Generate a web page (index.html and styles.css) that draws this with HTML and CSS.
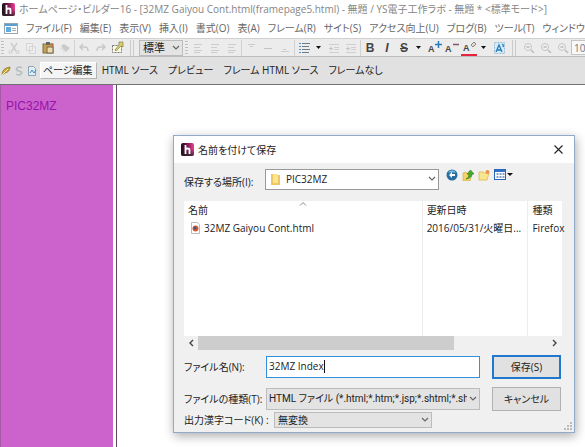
FILE: index.html
```html
<!DOCTYPE html>
<html lang="ja">
<head>
<meta charset="utf-8">
<title>ホームページ・ビルダー16</title>
<link rel="stylesheet" href="styles.css">
</head>
<body>
<svg class="defs" aria-hidden="true">
  <defs>
    <linearGradient id="logo-fill" x1="0" y1="0" x2="1" y2="0"><stop offset="0" stop-color="#16111a"/><stop offset=".4" stop-color="#6c1246"/><stop offset="1" stop-color="#ee3e92"/></linearGradient>
    <linearGradient id="logo-shade" x1="0" y1="0" x2="0" y2="1"><stop offset=".45" stop-color="#222" stop-opacity="0"/><stop offset="1" stop-color="#222" stop-opacity=".8"/></linearGradient>
    <symbol id="logo" viewBox="0 0 13 13"><rect width="13" height="13" rx="2" fill="url(#logo-fill)"/><rect width="13" height="13" rx="2" fill="url(#logo-shade)"/><path d="M4.500 2v9M4.500 7q0-1.500 2-1.500t2 1.500v4" fill="none" stroke="#fff" stroke-width="1.800"/></symbol>
    <symbol id="chevron" viewBox="0 0 8 6"><path d="M1 1l3 3 3-3" fill="none" stroke="#666" stroke-width="1.200"/></symbol>
    <symbol id="caret" viewBox="0 0 5 3"><path d="M0 0h5L2.500 3z" fill="#111"/></symbol>
    <symbol id="lines" viewBox="0 0 16 16"><path d="M4 4.500h8M4 7.500h6M4 10.500h8M4 12.500h6" stroke="#cdcdcd"/></symbol>
    <symbol id="indent" viewBox="0 0 16 16"><path d="M3 4.500h10M8 7.500h5M8 9.500h5M3 12.500h10" stroke="#cfcfcf"/><path d="M3 8.500h4M5 6.500v4" stroke="#c4c4c4"/></symbol>
    <symbol id="lens" viewBox="0 0 16 16"><circle cx="7" cy="7" r="3.500" fill="#eee" stroke="#c6c6c6"/><path d="M10 10l3 3M5.500 7h3" stroke="#bcbcbc" stroke-width="1.500"/></symbol>
  </defs>
</svg>

<div class="app">
  <header class="titlebar">
    <svg class="logo"><use href="#logo"/></svg>
    <h1>ホームページ・ビルダー16 - [32MZ Gaiyou Cont.html(framepage5.html) - 無題 / YS電子工作ラボ - 無題 * &lt;標準モード&gt;]</h1>
  </header>

  <nav class="menubar" aria-label="メニュー">
    <svg class="doc" viewBox="0 0 14 11"><rect x=".5" y=".5" width="13" height="10" fill="#fff" stroke="#93a6b6"/><path d="M1 2h12" stroke="#5a9ed2" stroke-width="2"/><rect x="2" y="4" width="5" height="5" fill="#64aadd"/><path d="M8 5.500h4M8 7.500h4" stroke="#aaa"/></svg>
    <button>ファイル(F)</button><button>編集(E)</button><button>表示(V)</button><button>挿入(I)</button><button>書式(O)</button><button>表(A)</button><button>フレーム(R)</button><button>サイト(S)</button><button>アクセス向上(U)</button><button>ブログ(B)</button><button>ツール(T)</button><button>ウィンドウ</button>
  </nav>

  <div class="toolbar" role="toolbar" aria-label="ツールバー">
    <span class="grip"></span>
    <div class="group">
      <button aria-label="切り取り"><svg viewBox="0 0 16 16"><path d="M5 3l5 8M11 3l-5 8" stroke="#ccc" stroke-width="1.500"/><circle cx="4.500" cy="12" r="1.500" fill="none" stroke="#ccc"/><circle cx="11.500" cy="12" r="1.500" fill="none" stroke="#ccc"/></svg></button>
      <button aria-label="コピー"><svg viewBox="0 0 16 16"><path d="M3.500 3.500h6v7h-6zM6.500 6.500h6v7h-6z" fill="#eee" stroke="#d6d6d6"/></svg></button>
      <button aria-label="貼り付け"><svg viewBox="0 0 16 16"><rect x="3" y="4" width="10" height="9" fill="#c9a04c" stroke="#77704c"/><rect x="6" y="2" width="4" height="3" fill="#666"/><rect x="7" y="7" width="6" height="6" fill="#ecdcac" stroke="#765"/><path d="M12 3v4" stroke="#e35543"/></svg></button>
      <button aria-label="書式のコピー"><svg viewBox="0 0 16 16"><path d="M4 6l3-2 6 4-4 4z" fill="#cacaca"/><path d="M3 8l4 2v3" stroke="#d8d8d8" fill="none"/></svg></button>
    </div>
    <span class="sep"></span>
    <div class="group">
      <button aria-label="元に戻す"><svg viewBox="0 0 16 16"><path d="M7 4L4 7l3 3M4 7h5q3 0 3 4" fill="none" stroke="#c8c8c8" stroke-width="1.500"/></svg></button>
      <button aria-label="やり直し"><svg viewBox="0 0 16 16"><path d="M9 4l3 3-3 3M12 7H7q-3 0-3 4" fill="none" stroke="#c8c8c8" stroke-width="1.500"/></svg></button>
    </div>
    <button aria-label="属性"><svg viewBox="0 0 16 16"><rect x="3.500" y="5.500" width="9" height="7" fill="#fafae8" stroke="#777" stroke-dasharray="2 1"/><path d="M10 2h4v5l-2-1-5 5-1-1 4-5z" fill="#d7d06a" stroke="#858046" stroke-width=".7"/></svg></button>
    <span class="sep double"></span>
    <label class="combo style"><select aria-label="スタイル"><option>標準</option></select><svg class="chev"><use href="#chevron"/></svg></label>
    <span class="grip"></span>
    <div class="group">
      <button aria-label="左揃え"><svg><use href="#lines"/></svg></button>
      <button aria-label="中央揃え"><svg><use href="#lines"/></svg></button>
      <button aria-label="右揃え"><svg><use href="#lines"/></svg></button>
    </div>
    <span class="sep"></span>
    <div class="group">
      <button aria-label="上揃え"><svg viewBox="0 0 16 16"><path d="M5 4.500h7M7 6.500h3" stroke="#ccc"/></svg></button>
      <button aria-label="中段揃え"><svg viewBox="0 0 16 16"><path d="M4 8.500h8" stroke="#c4c4c4"/></svg></button>
      <button aria-label="下揃え"><svg viewBox="0 0 16 16"><path d="M4 11.500h8M6 9.500h3" stroke="#ccc"/></svg></button>
    </div>
    <span class="sep"></span>
    <button aria-label="リスト"><svg viewBox="0 0 16 16"><path d="M6 3.500h8M6 6.500h7M6 9.500h8M6 12.500h7" stroke="#707d88"/><path d="M3 3.500h2M3 6.500h2M3 9.500h2M3 12.500h2" stroke="#3d95d8"/></svg></button>
    <svg class="caret"><use href="#caret"/></svg>
    <div class="group">
      <button aria-label="字下げ"><svg><use href="#indent"/></svg></button>
      <button aria-label="字上げ"><svg><use href="#indent"/></svg></button>
    </div>
    <span class="sep"></span>
    <div class="group">
      <button class="glyph bold">B</button><button class="glyph italic">I</button><button class="glyph strike">S</button>
    </div>
    <svg class="caret"><use href="#caret"/></svg>
    <div class="group">
      <button class="glyph sized" aria-label="文字を大きく">A<svg viewBox="0 0 7 7"><path d="M0 3.500h7M3.500 0v7" stroke="#267bbd" stroke-width="1.500"/></svg></button>
      <button class="glyph sized" aria-label="文字を小さく">A<svg viewBox="0 0 7 7"><path d="M1 3.500h6" stroke="#84546f" stroke-width="1.500"/></svg></button>
    </div>
    <button class="glyph sized color" aria-label="文字色">A<svg viewBox="0 0 7 7"><path d="M1 4l3-3 2 2-3 3z" fill="#ddd" stroke="#888"/></svg></button>
    <svg class="caret"><use href="#caret"/></svg>
    <button aria-label="フォント"><svg viewBox="0 0 16 16"><rect x="3.500" y="2.500" width="10" height="11" fill="#d9ebf7" stroke="#9abdd5" stroke-dasharray="2 1"/><path d="M5 12l3-7 3 7M6 10h4M11 4q2 1 1 3" fill="none" stroke="#247ebc" stroke-width="1.300"/></svg></button>
    <span class="sep double"></span>
    <div class="group">
      <button aria-label="拡大"><svg><use href="#lens"/></svg></button>
      <button aria-label="縮小"><svg><use href="#lens"/></svg></button>
      <button aria-label="等倍"><svg><use href="#lens"/></svg></button>
    </div>
    <input class="zoom" aria-label="倍率" value="10">
  </div>

  <div class="tabs">
    <svg class="mini" viewBox="0 0 10 10"><path d="M1 9Q1 2 9 1q0 5-5 6z" fill="#c9a437" stroke="#8a762c" stroke-width=".7"/><path d="M1 9l6-6" stroke="#fff3ac"/></svg>
    <svg class="mini" viewBox="0 0 10 10"><path d="M8 2Q5 0 3 2t2 3 2 3-5 0" fill="none" stroke="#b3bcc1" stroke-width="1.500"/></svg>
    <svg class="mini" viewBox="0 0 10 10"><path d="M1.500.5h5l2 2v7h-7z" fill="#e1eef5" stroke="#8ca5b5"/><path d="M3 7l2-3 2 3 2-3" fill="none" stroke="#3d8dbc"/></svg>
    <div class="tablist" role="tablist">
      <button role="tab" aria-selected="true">ページ編集</button><button role="tab">HTML ソース</button><button role="tab">プレビュー</button><button role="tab">フレーム HTML ソース</button><button role="tab">フレームなし</button>
    </div>
  </div>

  <main class="workspace">
    <aside class="frame"><a href="#page">PIC32MZ</a></aside>
    <section class="canvas" id="page"></section>
  </main>
</div>

<form class="dialog" role="dialog" aria-labelledby="dialog-title">
  <header class="dialog-title">
    <svg class="logo"><use href="#logo"/></svg>
    <h2 id="dialog-title">名前を付けて保存</h2>
    <button type="button" class="close" aria-label="閉じる"><svg viewBox="0 0 9 9"><path d="M.5.5l8 8M8.500.5l-8 8" stroke="#222" stroke-width="1.100"/></svg></button>
  </header>

  <div class="place">
    <label for="place">保存する場所(I):</label>
    <div class="combo folder">
      <svg class="folder-icon" viewBox="0 0 9 12"><path d="M0 1h7v1h2v10H0z" fill="#edc75f"/><path d="M2 1h5v9H2z" fill="#ffe38f"/></svg>
      <select id="place"><option>PIC32MZ</option></select><svg class="chev"><use href="#chevron"/></svg>
    </div>
    <div class="nav">
      <button type="button" aria-label="戻る"><svg viewBox="0 0 12 12"><circle cx="6" cy="6" r="5.500" fill="#286f9f"/><path d="M2 3.500Q6-1 10 3.500" fill="#77bcdf"/><path d="M6 3L3 6l3 3V7h3V5H6z" fill="#fff"/></svg></button>
      <button type="button" aria-label="上へ"><svg viewBox="0 0 12 12"><path d="M1 4l3-1 1 2h5l-2 7H1z" fill="#f3d366" stroke="#d4a83c" stroke-width=".6"/><path d="M4 10q3-1 3-5H5l3.500-4L12 5h-2q0 4-6 5z" fill="#47aa2d" stroke="#26781c" stroke-width=".6"/></svg></button>
      <button type="button" aria-label="新しいフォルダー"><svg viewBox="0 0 12 12"><path d="M1 3h4l1 1h5l-2 7H1z" fill="#fae58f" stroke="#e2b84c" stroke-width=".8"/><circle cx="9.500" cy="3" r="2" fill="#ed944a"/></svg></button>
      <button type="button" class="view" aria-label="表示"><svg viewBox="0 0 19 12"><rect x=".5" y=".5" width="11" height="10" fill="#fff" stroke="#2866b7"/><path d="M1 2h10" stroke="#3474c8" stroke-width="2"/><path d="M2.500 5h2M5.500 5h2M8.500 5h2M2.500 8h2M5.500 8h2M8.500 8h2" stroke="#5d83b5" stroke-width="1.500"/><path d="M13 4h6l-3 3z" fill="#111"/></svg></button>
    </div>
  </div>

  <div class="files">
    <svg class="sort" viewBox="0 0 8 4"><path d="M1 3.500l3-3 3 3" fill="none" stroke="#888"/></svg>
    <table>
      <thead><tr><th class="name">名前</th><th class="date">更新日時</th><th>種類</th></tr></thead>
      <tbody>
        <tr><td><span class="file"><svg viewBox="0 0 9 12"><path d="M.5.5h6l2 2v9h-8z" fill="#fff" stroke="#bbb"/><circle cx="4.500" cy="6.500" r="3" fill="#d85b29"/><circle cx="4" cy="6" r="1.500" fill="#41528d"/></svg>32MZ Gaiyou Cont.html</span></td><td>2016/05/31/火曜日...</td><td>Firefox</td></tr>
        <tr class="rest"><td></td><td></td><td></td></tr>
      </tbody>
    </table>
    <div class="scroll">
      <button type="button" aria-label="左へ"><svg viewBox="0 0 6 8"><path d="M5 1L2 4l3 3" fill="none" stroke="#444" stroke-width="1.400"/></svg></button>
      <div class="track"><div class="thumb"></div></div>
      <button type="button" aria-label="右へ"><svg viewBox="0 0 6 8"><path d="M1 1l3 3-3 3" fill="none" stroke="#444" stroke-width="1.400"/></svg></button>
    </div>
  </div>

  <div class="fields">
    <label for="name">ファイル名(N):</label>
    <div class="entry"><input id="name" value="32MZ Index"><span class="cursor"></span></div>
    <button class="primary">保存(S)</button>
    <label for="type">ファイルの種類(T):</label>
    <div class="combo gray types"><select id="type"><option>HTML ファイル (*.html;*.htm;*.jsp;*.shtml;*.sht</option></select><svg class="chev"><use href="#chevron"/></svg></div>
    <button type="button">キャンセル</button>
  </div>
  <div class="encoding">
    <label for="code">出力漢字コード(K) :</label>
    <div class="combo gray"><select id="code"><option>無変換</option></select><svg class="chev"><use href="#chevron"/></svg></div>
  </div>
  <svg class="resize" viewBox="0 0 8 8"><path d="M6 0h2v2H6zM3 3h2v2H3zM6 3h2v2H6zM0 6h2v2H0zM3 6h2v2H3zM6 6h2v2H6z" fill="#bbb"/></svg>
</form>
</body>
</html>
```
FILE: styles.css
```css
* { box-sizing: border-box; }
body {
  margin: 0;
  overflow: hidden;
  font: 10px/16px "Open Sans", "Noto Sans CJK JP", sans-serif;
  font-feature-settings: "palt";
  color: #222;
  background: #fff;
}
button, input, select { font: inherit; font-feature-settings: inherit; color: inherit; margin: 0; padding: 0; border: 0; background: none; border-radius: 0; }
h1, h2 { margin: 0; font: inherit; white-space: nowrap; }
svg { display: block; flex: none; }
.defs { position: absolute; width: 0; height: 0; }
.app { display: flex; flex-direction: column; height: 100vh; }
.logo { width: 13px; height: 13px; }

.titlebar { display: flex; align-items: center; gap: 4px; height: 18px; padding-left: 2px; color: #858585; flex: none; }

.menubar { display: flex; align-items: center; gap: 8px; height: 20px; padding-left: 4px; color: #666; white-space: nowrap; flex: none; }
.menubar button { flex: none; }
.doc { width: 14px; height: 11px; }

.toolbar { display: flex; align-items: center; height: 19px; flex: none; overflow: hidden; background: #ececec; border-top: 1px solid #d0d0d0; border-bottom: 1px solid #bcbcbc; padding-left: 1px; }
.toolbar > * { flex: none; }
.toolbar button { width: 16px; height: 16px; flex: none; }
.toolbar button > svg { width: 16px; height: 16px; }
.group { display: flex; gap: 1px; }
.grip { width: 3px; height: 14px; margin-right: 2px; background: repeating-linear-gradient(#bdbdbd 0 1px, #eee 1px 3px); }
.sep { width: 1px; height: 16px; margin: 0 1px; background: #d2d2d2; }
.sep.double { width: 4px; margin: 0 5px; background: none; border: solid #cbcbcb; border-width: 0 1px; }
.caret { width: 5px; height: 3px; margin: 0 5px 0 4px; }
.toolbar .glyph { position: relative; font: bold 12px/16px "Liberation Sans", sans-serif; color: #444; }
.toolbar .italic { font-style: italic; }
.toolbar .strike { text-decoration: line-through; }
.toolbar .sized { font-size: 9px; text-align: left; padding: 2px 0 0 2px; line-height: 14px; }
.toolbar .sized > svg { position: absolute; top: 1px; right: 0; width: 7px; height: 7px; }
.toolbar .color { border-bottom: 2px solid #e7233d; line-height: 12px; margin-left: 2px; }
.zoom { width: 40px; height: 15px; border: 1px solid #c4c4c4; background: #f8f8f8; color: #777; padding-left: 2px; }

.combo { position: relative; display: block; }
.combo select { appearance: none; display: block; width: 100%; height: 100%; padding: 0 12px 0 3px; border: 1px solid #bcbcbc; background: #f8f8f8; text-overflow: clip; }
.chev { position: absolute; right: 3px; top: calc(50% - 3px); width: 8px; height: 6px; pointer-events: none; }
.style { width: 44px; height: 16px; margin-right: 2px; }
.style select { background: #e4e4e4; line-height: 14px; font-size: 11px; }

.tabs { display: flex; align-items: center; gap: 3px; flex: none; height: 28px; padding-left: 1px; background: #e1e1e1; border-bottom: 1px solid #707070; }
.mini { width: 10px; height: 10px; }
.tablist { display: flex; white-space: nowrap; }
.tablist button { padding: 0 4px; height: 17px; line-height: 15px; border: 1px solid transparent; }
.tablist [aria-selected] { padding: 0 3px 0 2px; background: #f5f5f5; border-color: #fff #b6b6b6 #b6b6b6 #fff; }

.workspace { display: flex; flex: 1; }
.frame { width: 113px; padding: 13px 5px; background: #cc62cc; border-left: 1px solid #a75ba7; font: 12px/16px "Liberation Sans", sans-serif; }
.frame a { color: #9612a9; text-decoration: none; }
.canvas { flex: 1; margin-left: 3px; border-left: 1px solid #5d4a62; background: #fff; }

.dialog { position: absolute; top: 135px; right: 10px; width: 402px; background: #f0f0f0; border: 1px solid #8eabc9; box-shadow: 1px 3px 10px #0005; padding-bottom: 4px; }
.dialog-title { display: flex; align-items: center; gap: 4px; height: 27px; padding: 0 11px 0 7px; background: #fff; }
.close { margin-left: auto; }
.close svg { width: 9px; height: 9px; }
.place { display: flex; align-items: center; height: 38px; padding: 0 10px; }
.place label { width: 81px; }
.folder { flex: 1; height: 21px; margin: 0 7px 6px 0; }
.folder select { padding-left: 20px; background: #fff; border-color: #999; }
.folder-icon { position: absolute; left: 6px; top: 4px; width: 9px; height: 12px; }
.nav { display: flex; gap: 4px; margin-bottom: 14px; width: 118px; }
.nav svg { width: 12px; height: 12px; }
.nav .view svg { width: 19px; }
.place .nav { flex: none; }

.files { position: relative; margin: 0 12px 0 10px; background: #fff; }
.sort { position: absolute; left: 115px; top: 1px; width: 8px; height: 4px; }
table { width: 100%; table-layout: fixed; border-collapse: collapse; }
th, td { padding: 0 0 0 4px; text-align: left; font-weight: normal; white-space: nowrap; height: 18px; border-right: 1px solid #ededed; }
th:last-child, td:last-child { border-right: 0; }
.name { width: 63%; }
.date { width: 28%; }
.rest td { height: 99px; }
.file { display: flex; align-items: center; gap: 4px; padding-left: 3px; }
.file svg { width: 9px; height: 12px; }
.scroll { display: flex; height: 14px; background: #f0f0f0; }
.scroll button { width: 14px; display: grid; place-items: center; }
.scroll svg { width: 6px; height: 8px; }
.track { flex: 1; }
.thumb { width: 73%; height: 100%; background: #cdcdcd; }

.fields { display: grid; grid-template-columns: 82px 1fr 69px; column-gap: 0; row-gap: 8px; align-items: center; padding: 5px 13px 0 10px; }
.fields label, .encoding label { white-space: nowrap; }
.fields .entry, .fields .combo { height: 22px; margin-right: 12px; }
.entry { position: relative; }
.entry input { width: 100%; height: 100%; padding: 0 2px 2px; background: #fff; border: 1px solid #3390e0; }
.cursor { position: absolute; left: 58px; top: 4px; width: 1px; height: 13px; background: #111; }
.fields button { height: 24px; background: #e1e1e1; border: 1px solid #b1b1b1; }
.fields .primary { border: 2px solid #2079cf; }
.gray select { background: #e3e3e3; }
.types select { padding-left: 2px; font-family: Roboto, "Noto Sans CJK JP", sans-serif; }
.encoding { display: flex; align-items: center; padding: 1px 0 0 10px; }
.encoding label { width: 90px; }
.encoding .combo { width: 158px; height: 16px; }
.encoding select { line-height: 14px; }
.resize { position: absolute; right: 2px; bottom: 2px; width: 8px; height: 8px; }
```
